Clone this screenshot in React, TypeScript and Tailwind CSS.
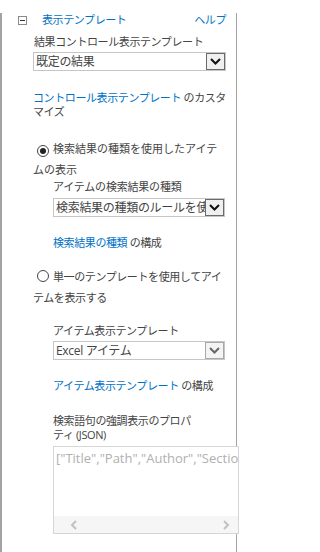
const font = "font-['Open_Sans','Noto_Sans_CJK_JP',sans-serif]";

function Chevron({ color }: { color: string }) {
  return (
    <svg width="11" height="7" viewBox="0 0 11 7">
      <path d="M1 1 L5.5 5.5 L10 1" fill="none" stroke={color} strokeWidth="2" />
    </svg>
  );
}

function Select({ text, disabled }: { text: string; disabled?: boolean }) {
  return (
    <div className="flex h-[19px] items-center border border-[#c6c6c6] bg-white">
      <div className="flex-1 overflow-hidden whitespace-nowrap pl-[2px] text-[12px] leading-[17px] tracking-[-0.3px] text-[#444]">
        {text}
      </div>
      <div
        className={
          disabled
            ? "flex h-[17px] w-[19px] shrink-0 items-center justify-center border border-[#a8a8a8] bg-[#f4f4f4]"
            : "flex h-[17px] w-[19px] shrink-0 items-center justify-center border border-[#6a6a6a] bg-[#f0f0f0]"
        }
      >
        <Chevron color={disabled ? "#666" : "#111"} />
      </div>
    </div>
  );
}

function Radio({ checked }: { checked?: boolean }) {
  return (
    <span className="ml-[4px] mr-[4px] inline-flex h-[12px] w-[12px] items-center justify-center rounded-full border border-[#444] bg-white align-[-1px]">
      {checked && <span className="h-[6px] w-[6px] rounded-full bg-[#222]" />}
    </span>
  );
}

export default function App() {
  return (
    <div className={`h-[552px] w-[239px] overflow-hidden bg-white ${font}`}>
      <div className="h-[552px] w-[237px] border-l-2 border-r border-[#a3a3a3] pl-[16px] pr-[10px]">
        <div className="mt-[13px] flex h-[14px] items-center text-[11px] tracking-[-0.4px] text-[#0072c6]">
          <span className="flex h-[9px] w-[9px] items-center justify-center border border-[#8a8a8a]">
            <span className="h-[1px] w-[5px] bg-[#333]" />
          </span>
          <span className="ml-[15px]">表示テンプレート</span>
          <span className="ml-auto">ヘルプ</span>
        </div>

        <div className="ml-[15px]">
          <div className="mt-[8px] ml-[1px] text-[11px] leading-[14px] tracking-[-0.4px] text-[#444]">
            結果コントロール表示テンプレート
          </div>
          <div className="mt-[3px]">
            <Select text="既定の結果" />
          </div>
          <div className="mt-[20px] whitespace-nowrap text-[11px] leading-[14px] tracking-[-0.4px] text-[#444]">
            <span className="text-[#0072c6]">コントロール表示テンプレート</span> のカスタ
            <br />
            マイズ
          </div>

          <div className="mt-[19px] whitespace-nowrap text-[11px] leading-[21px] tracking-[0px] text-[#444]">
            <Radio checked />
            検索結果の種類を使用したアイテ
            <br />
            ムの表示
          </div>
          <div className="ml-[20px]">
            <div className="text-[11px] leading-[14px] tracking-[-0.2px] text-[#444]">アイテムの検索結果の種類</div>
            <div className="mt-[4px] mr-[1px]">
              <Select text="検索結果の種類のルールを使用" />
            </div>
            <div className="mt-[19px] text-[11px] leading-[14px] tracking-[-0.4px] text-[#444]">
              <span className="text-[#0072c6]">検索結果の種類</span> の構成
            </div>
          </div>

          <div className="mt-[16px] whitespace-nowrap text-[11px] leading-[21px] tracking-[-0.4px] text-[#444]">
            <Radio />
            単一のテンプレートを使用してアイ
            <br />
            テムを表示する
          </div>
          <div className="ml-[20px]">
            <div className="mt-[16px] text-[11px] leading-[14px] tracking-[-0.4px] text-[#444]">アイテム表示テンプレート</div>
            <div className="mt-[3px] mr-[1px]">
              <Select text="Excel アイテム" disabled />
            </div>
            <div className="mt-[19px] text-[11px] leading-[14px] tracking-[-0.4px] text-[#444]">
              <span className="text-[#0072c6]">アイテム表示テンプレート</span> の構成
            </div>
            <div className="mt-[21px] whitespace-nowrap text-[11px] leading-[14px] tracking-[-0.4px] text-[#444]">
              検索語句の強調表示のプロパ
              <br />
              ティ (JSON)
            </div>
            <div className="mt-[4px] flex h-[88px] w-[186px] flex-col border border-[#d6d6d6] bg-white">
              <div className="flex-1 overflow-hidden whitespace-nowrap pl-[2px] pt-[3px] text-[13px] leading-[16px] text-[#b0b0b0]">
                ["Title","Path","Author","SectionNames"]
              </div>
              <div className="flex h-[17px] items-center justify-between bg-[#f6f6f6] pl-[16px] pr-[8px]">
                <svg width="8" height="10" viewBox="0 0 8 10">
                  <path d="M6 1 L2 5 L6 9" fill="none" stroke="#c2c2c2" strokeWidth="2" />
                </svg>
                <svg width="8" height="10" viewBox="0 0 8 10">
                  <path d="M2 1 L6 5 L2 9" fill="none" stroke="#c2c2c2" strokeWidth="2" />
                </svg>
              </div>
            </div>
          </div>
        </div>
      </div>
    </div>
  );
}
